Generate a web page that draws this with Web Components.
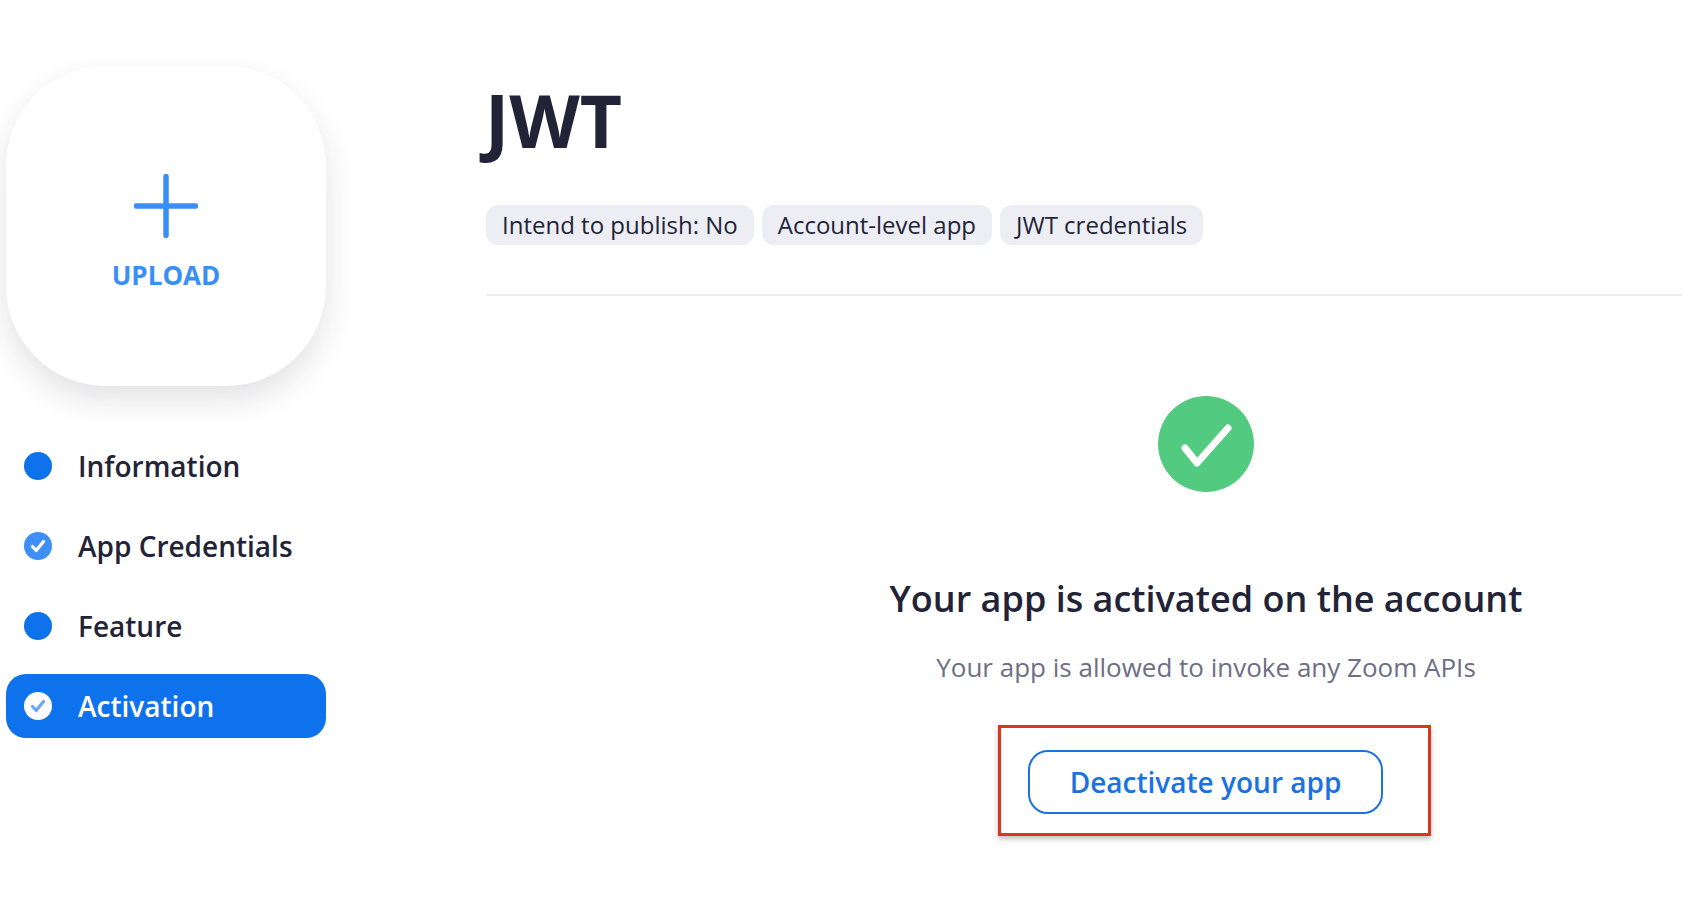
<!DOCTYPE html>
<html lang="en">
<head>
<meta charset="utf-8">
<title>JWT</title>
<style>
    html, body { margin: 0; background: #fff; overflow: hidden; }
    body { font-family: "Open Sans", "Liberation Sans", sans-serif; color: #232338; }
</style>
</head>
<body>
<app-page>
    <app-sidebar slot="sidebar">
        <upload-card></upload-card>
        <step-item state="dot">Information</step-item>
        <step-item state="done">App Credentials</step-item>
        <step-item state="dot">Feature</step-item>
        <step-item state="done" active>Activation</step-item>
    </app-sidebar>
    <app-header slot="main" title="JWT">
        <info-tag>Intend to publish: No</info-tag>
        <info-tag>Account-level app</info-tag>
        <info-tag>JWT credentials</info-tag>
    </app-header>
    <activation-panel slot="main" heading="Your app is activated on the account" text="Your app is allowed to invoke any Zoom APIs">
        <annotated-box>
            <outline-button>Deactivate your app</outline-button>
        </annotated-box>
    </activation-panel>
</app-page>
<script>
class AppPage extends HTMLElement {
    connectedCallback() {
        this.attachShadow({ mode: 'open' });
        this.shadowRoot.innerHTML = `
            <style>
                :host { display: flex; width: 1682px; height: 898px; overflow: hidden; }
                .side { display: block; flex: none; width: 320px; margin-left: 6px; padding-top: 66px; }
                .main { display: block; flex: none; width: 1196px; margin-left: 160px; }
            </style>
            <div class="side"><slot name="sidebar"></slot></div>
            <div class="main"><slot name="main"></slot></div>
        `;
    }
}

class AppSidebar extends HTMLElement {
    connectedCallback() {
        this.attachShadow({ mode: 'open' });
        this.shadowRoot.innerHTML = `
            <style>
                :host { display: flex; flex-direction: column; gap: 16px; }
            </style>
            <slot></slot>
        `;
    }
}

class UploadCard extends HTMLElement {
    connectedCallback() {
        this.attachShadow({ mode: 'open' });
        this.shadowRoot.innerHTML = `
            <style>
                :host {
                    display: flex;
                    flex-direction: column;
                    align-items: center;
                    box-sizing: border-box;
                    width: 320px;
                    height: 320px;
                    margin-bottom: 32px;
                    padding-top: 108px;
                    border-radius: 100px;
                    background: #fff;
                    box-shadow: 0 14px 30px rgba(35, 35, 51, 0.13);
                    color: #3a8ff7;
                }
                svg { display: block; }
                span { margin-top: 19px; font-size: 26px; line-height: 36px; font-weight: 700; }
            </style>
            <svg width="64" height="64" viewBox="0 0 64 64" fill="none" stroke="#3a8ff7" stroke-width="5.5" stroke-linecap="round">
                <path d="M32 2.5V61.5M2.5 32H61.5"/>
            </svg>
            <span>UPLOAD</span>
        `;
    }
}

class StepItem extends HTMLElement {
    connectedCallback() {
        const active = this.hasAttribute('active');
        const done = this.getAttribute('state') === 'done';
        const fill = active ? '#fff' : done ? '#3e8ff7' : '#0e72ed';
        const tick = active ? '#6ea6f0' : '#fff';
        this.attachShadow({ mode: 'open' });
        this.shadowRoot.innerHTML = `
            <style>
                :host {
                    display: flex;
                    align-items: center;
                    gap: 26px;
                    box-sizing: border-box;
                    height: 64px;
                    padding-left: 18px;
                    border-radius: 20px;
                    font-size: 28px;
                    font-weight: 600;
                    color: #232338;
                }
                :host([active]) { background: #0e72ed; color: #fff; }
                svg { display: block; flex: none; }
            </style>
            <svg width="28" height="28" viewBox="0 0 28 28">
                <circle cx="14" cy="14" r="14" fill="${fill}"/>
                ${done ? `<path d="M8.5 14.5L12.2 18.5L19.5 9.5" fill="none" stroke="${tick}" stroke-width="3.2" stroke-linecap="round" stroke-linejoin="round"/>` : ''}
            </svg>
            <span><slot></slot></span>
        `;
    }
}

class AppHeader extends HTMLElement {
    connectedCallback() {
        this.attachShadow({ mode: 'open' });
        this.shadowRoot.innerHTML = `
            <style>
                :host { display: block; padding-top: 80px; }
                h1 { margin: 0 0 45px -1px; font-size: 73px; line-height: 80px; font-weight: 700; color: #232338; }
                .tags { display: flex; gap: 8px; padding-bottom: 49px; border-bottom: 2px solid #edeef2; }
            </style>
            <h1>${this.getAttribute('title')}</h1>
            <div class="tags"><slot></slot></div>
        `;
    }
}

class InfoTag extends HTMLElement {
    connectedCallback() {
        this.attachShadow({ mode: 'open' });
        this.shadowRoot.innerHTML = `
            <style>
                :host {
                    display: block;
                    padding: 0 16px;
                    border-radius: 12px;
                    background: #edeef4;
                    font-size: 24px;
                    line-height: 40px;
                    color: #232338;
                }
            </style>
            <slot></slot>
        `;
    }
}

class ActivationPanel extends HTMLElement {
    connectedCallback() {
        this.attachShadow({ mode: 'open' });
        this.shadowRoot.innerHTML = `
            <style>
                :host {
                    display: flex;
                    flex-direction: column;
                    align-items: center;
                    padding: 100px 0 0 244px;
                    text-align: center;
                }
                svg { display: block; }
                h2 { margin: 83px 0 0; font-size: 36px; line-height: 48px; font-weight: 600; color: #232338; white-space: nowrap; }
                p { margin: 26px 0 40px; font-size: 26px; line-height: 36px; color: #6e6e85; white-space: nowrap; }
            </style>
            <svg width="96" height="96" viewBox="0 0 96 96">
                <circle cx="48" cy="48" r="48" fill="#52cb80"/>
                <path d="M27 52L39 67L70 32" fill="none" stroke="#fff" stroke-width="7" stroke-linecap="round" stroke-linejoin="round"/>
            </svg>
            <h2>${this.getAttribute('heading')}</h2>
            <p>${this.getAttribute('text')}</p>
            <slot></slot>
        `;
    }
}

class AnnotatedBox extends HTMLElement {
    connectedCallback() {
        this.attachShadow({ mode: 'open' });
        this.shadowRoot.innerHTML = `
            <style>
                :host {
                    display: block;
                    padding: 22px 45px 19px 27px;
                    margin-left: 17px;
                    border: 3px solid #d8391c;
                    box-shadow: 0 3px 5px rgba(0, 0, 0, 0.25);
                }
            </style>
            <slot></slot>
        `;
    }
}

class OutlineButton extends HTMLElement {
    connectedCallback() {
        this.attachShadow({ mode: 'open' });
        this.shadowRoot.innerHTML = `
            <style>
                :host {
                    display: flex;
                    align-items: center;
                    justify-content: center;
                    box-sizing: border-box;
                    width: 355px;
                    height: 64px;
                    border: 2px solid #1a72e2;
                    border-radius: 20px;
                    font-size: 28px;
                    font-weight: 600;
                    color: #1a72e2;
                }
            </style>
            <slot></slot>
        `;
    }
}

customElements.define('app-page', AppPage);
customElements.define('app-sidebar', AppSidebar);
customElements.define('upload-card', UploadCard);
customElements.define('step-item', StepItem);
customElements.define('app-header', AppHeader);
customElements.define('info-tag', InfoTag);
customElements.define('activation-panel', ActivationPanel);
customElements.define('annotated-box', AnnotatedBox);
customElements.define('outline-button', OutlineButton);
</script>
</body>
</html>
